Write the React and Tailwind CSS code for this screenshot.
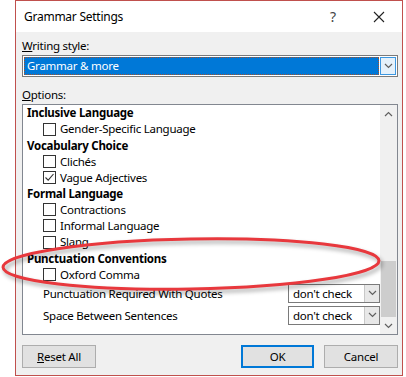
import React from "react";

function Check({ checked }) {
  return (
    <span className="flex h-[13px] w-[13px] shrink-0 items-center justify-center border border-[#333] bg-white">
      {checked && (
        <svg width="11" height="11" viewBox="0 0 11 11">
          <path d="M1.5 5.5 L4.2 8.2 L9.5 2" fill="none" stroke="#333" strokeWidth="1.1" />
        </svg>
      )}
    </span>
  );
}

function Heading({ children }) {
  return <div className="flex h-[16px] items-center pl-[4px] font-bold">{children}</div>;
}

function Option({ label, checked }) {
  return (
    <div className="flex h-[16.2px] items-center gap-[4px] pl-[20px]">
      <Check checked={checked} />
      <span>{label}</span>
    </div>
  );
}

function Chevron({ up }) {
  return (
    <svg width="9" height="6" viewBox="0 0 9 6">
      <path d={up ? "M1 5 L4.5 1.5 L8 5" : "M1 1 L4.5 4.5 L8 1"} fill="none" stroke="#606060" strokeWidth="1.2" />
    </svg>
  );
}

function SmallSelect() {
  return (
    <div className="flex h-[19px] w-[92px] border border-[#7a7a7a] bg-white">
      <span className="flex-1 pl-[4px] leading-[17px]">don't check</span>
      <span className="flex w-[15px] items-center justify-center border-l border-[#c8c8c8] bg-[#e8e8e8]">
        <Chevron />
      </span>
    </div>
  );
}

export default function App() {
  return (
    <div className="relative h-[377px] w-[406px] overflow-hidden bg-white font-['Noto_Sans',sans-serif] text-[11.5px] tracking-[-0.25px] text-black">
      <div className="ml-[15px] flex h-[376px] w-[388px] flex-col border border-[#c0504d] bg-[#f0f0f0]">
        {/* Title bar */}
        <div className="flex h-[31px] items-center bg-white pl-[8px]">
          <span className="flex-1 text-[12px]">Grammar Settings</span>
          <span className="w-[46px] text-center text-[14px] text-[#444]">?</span>
          <span className="flex w-[46px] items-center justify-center">
            <svg width="12" height="12" viewBox="0 0 12 12">
              <path d="M1 1 L11 11 M11 1 L1 11" stroke="#222" strokeWidth="1.1" />
            </svg>
          </span>
        </div>

        <div className="flex flex-1 flex-col pl-[6px] pr-[4px]">
          <div className="mt-[6px] h-[16px] leading-[16px]">
            <span className="underline">W</span>riting style:
          </div>
          <div className="mt-[1px] flex h-[22px] border border-[#7a7a7a] bg-white p-[1px]">
            <div className="flex flex-1 items-center border border-dotted border-[#a0522d] bg-[#0078d7] pl-[2px] text-white">
              Grammar &amp; more
            </div>
            <span className="ml-[1px] flex w-[16px] items-center justify-center border border-[#3c97e0] bg-[#e5f1fb]">
              <Chevron />
            </span>
          </div>

          <div className="mt-[10px] h-[16px] leading-[16px]">
            <span className="underline">O</span>ptions:
          </div>

          {/* List box */}
          <div className="mt-[1px] flex h-[231px] border border-[#828790] bg-white">
            <div className="flex-1">
              <Heading>Inclusive Language</Heading>
              <Option label="Gender-Specific Language" />
              <Heading>Vocabulary Choice</Heading>
              <Option label="Clichés" />
              <Option label="Vague Adjectives" checked />
              <Heading>Formal Language</Heading>
              <Option label="Contractions" />
              <Option label="Informal Language" />
              <Option label="Slang" />
              <Heading>Punctuation Conventions</Heading>
              <Option label="Oxford Comma" />
              <div className="flex h-[22px] items-center justify-between pl-[20px]">
                <span>Punctuation Required With Quotes</span>
                <SmallSelect />
              </div>
              <div className="flex h-[22px] items-center justify-between pl-[20px]">
                <span>Space Between Sentences</span>
                <SmallSelect />
              </div>
            </div>
            {/* Scrollbar */}
            <div className="flex w-[17px] flex-col bg-[#f0f0f0]">
              <div className="flex h-[17px] items-center justify-center">
                <Chevron up />
              </div>
              <div className="flex-1" />
              <div className="mx-[1px] h-[56px] bg-[#cdcdcd]" />
              <div className="flex h-[17px] items-center justify-center">
                <Chevron />
              </div>
            </div>
          </div>

          {/* Buttons */}
          <div className="mt-[10px] flex h-[23px] items-center">
            <button className="h-[23px] w-[74px] border border-[#adadad] bg-[#e1e1e1]">
              <span className="underline">R</span>eset All
            </button>
            <div className="flex-1" />
            <button className="h-[23px] w-[73px] border-2 border-[#0078d7] bg-[#e1e1e1]">OK</button>
            <button className="ml-[10px] h-[23px] w-[74px] border border-[#adadad] bg-[#e1e1e1]">Cancel</button>
          </div>
        </div>
      </div>

      {/* Red annotation ellipse */}
      <svg
        className="pointer-events-none absolute left-0 top-0 drop-shadow-[2px_3px_2px_rgba(0,0,0,0.35)]"
        width="406"
        height="377"
        viewBox="0 0 406 377"
      >
        <ellipse
          cx="191"
          cy="264"
          rx="188"
          ry="25"
          transform="rotate(-1 191 264)"
          fill="none"
          stroke="#e8383d"
          strokeWidth="3"
        />
      </svg>
    </div>
  );
}
